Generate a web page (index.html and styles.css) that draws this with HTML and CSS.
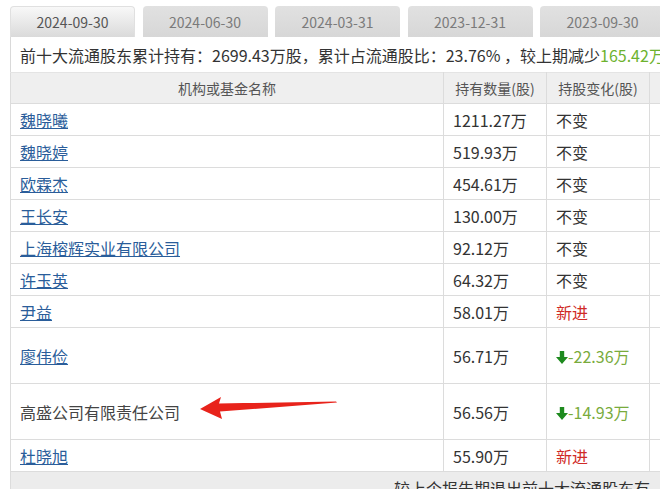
FILE: index.html
```html
<!DOCTYPE html>
<html lang="zh-CN">
<head>
<meta charset="utf-8">
<title>前十大流通股东</title>
<link rel="stylesheet" href="styles.css">
</head>
<body>
<div class="page">
  <div class="tabs">
    <div class="tab active">2024-09-30</div>
    <div class="tab">2024-06-30</div>
    <div class="tab">2024-03-31</div>
    <div class="tab">2023-12-31</div>
    <div class="tab">2023-09-30</div>
  </div>
  <div class="panel">
    <div class="summary">前十大流通股东累计持有：2699.43万股，累计占流通股比：23.76% ，较上期减少<span class="up-green">165.42万股</span></div>
    <table class="holders">
      <colgroup>
        <col class="c-name"><col class="c-num"><col class="c-chg"><col class="c-extra">
      </colgroup>
      <thead>
        <tr><th>机构或基金名称</th><th>持有数量(股)</th><th>持股变化(股)</th><th></th></tr>
      </thead>
      <tbody>
        <tr><td><a href="#">魏晓曦</a></td><td>1211.27万</td><td>不变</td><td></td></tr>
        <tr><td><a href="#">魏晓婷</a></td><td>519.93万</td><td>不变</td><td></td></tr>
        <tr><td><a href="#">欧霖杰</a></td><td>454.61万</td><td>不变</td><td></td></tr>
        <tr><td><a href="#">王长安</a></td><td>130.00万</td><td>不变</td><td></td></tr>
        <tr><td><a href="#">上海榕辉实业有限公司</a></td><td>92.12万</td><td>不变</td><td></td></tr>
        <tr><td><a href="#">许玉英</a></td><td>64.32万</td><td>不变</td><td></td></tr>
        <tr><td><a href="#">尹益</a></td><td>58.01万</td><td class="new">新进</td><td></td></tr>
        <tr class="tall"><td><a href="#">廖伟俭</a></td><td>56.71万</td><td class="down"><svg class="darrow" viewBox="0 0 12 13" width="12" height="13"><path d="M3.8 0h4.4v6h3.8L6 13 0 6h3.8z" fill="#1e8a1e"/></svg>-22.36万</td><td></td></tr>
        <tr class="tall"><td class="plain">高盛公司有限责任公司</td><td>56.56万</td><td class="down"><svg class="darrow" viewBox="0 0 12 13" width="12" height="13"><path d="M3.8 0h4.4v6h3.8L6 13 0 6h3.8z" fill="#1e8a1e"/></svg>-14.93万</td><td></td></tr>
        <tr><td><a href="#">杜晓旭</a></td><td>55.90万</td><td class="new">新进</td><td></td></tr>
        <tr class="foot"><td colspan="4"><span class="foot-text">较上个报告期退出前十大流通股东有</span></td></tr>
      </tbody>
    </table>
    <svg class="callout" viewBox="0 0 140 24" width="140" height="24">
      <path d="M0 13 L21 1 L19 7.5 L136 5.5 L137 6.5 L20 15.5 L22 23 Z" fill="#e8231b"/>
    </svg>
  </div>
</div>
</body>
</html>
```
FILE: styles.css
```css
* { box-sizing: border-box; }
html, body { margin: 0; padding: 0; background: #fff; overflow: hidden; }
body {
  font-family: "Noto Sans CJK SC", "Noto Sans", sans-serif;
  color: #333;
}
.page {
  width: 800px;
  padding: 6px 0 0 10px;
}
.tabs {
  display: flex;
  gap: 7.5px;
  height: 31px;
}
.tab {
  width: 125px;
  height: 31px;
  border-radius: 4px 4px 0 0;
  background: linear-gradient(#e1e1e1, #d7d7d7);
  color: #7a7a7a;
  font-size: 14px;
  display: flex;
  align-items: center;
  justify-content: center;
}
.tab.active {
  background: linear-gradient(#f8f8f8, #dadada);
  color: #555;
  border: 1px solid #e0e0e0;
  border-bottom: none;
}
.panel {
  position: relative;
  border-left: 1px solid #d9d9d9;
}
.summary {
  height: 35px;
  display: flex;
  align-items: center;
  padding-left: 9px;
  font-size: 16px;
  white-space: nowrap;
  color: #333;
}
.up-green { color: #6db22e; }
.holders {
  border-collapse: collapse;
  table-layout: fixed;
  width: 780px;
  margin-left: -1px;
  font-size: 16px;
}
.c-name { width: 433px; }
.c-num { width: 103px; }
.c-chg { width: 103px; }
.c-extra { width: 141px; }
.holders th {
  height: 31px;
  background: #efefef;
  border: 1px solid #dcdcdc;
  border-top-color: #e4e4e4;
  font-weight: normal;
  font-size: 14px;
  color: #555;
  text-align: center;
  padding: 0;
}
.holders td {
  height: 32px;
  border: 1px solid #dcdcdc;
  padding: 0 0 0 9px;
  white-space: nowrap;
  vertical-align: middle;
  color: #333;
}
.holders tr.tall td { height: 56px; }
.holders a {
  color: #2a5d9a;
  text-decoration: underline;
}
.holders td.plain { color: #444; }
.holders td.new { color: #d02a26; }
.holders td.down { color: #79ab3c; }
.darrow {
  vertical-align: -1px;
}
.holders tr.foot td {
  background: #ececec;
  height: 32px;
  padding-left: 383px;
}
.foot-text { color: #333; }
.callout {
  position: absolute;
  left: 189px;
  top: 359px;
}
```
